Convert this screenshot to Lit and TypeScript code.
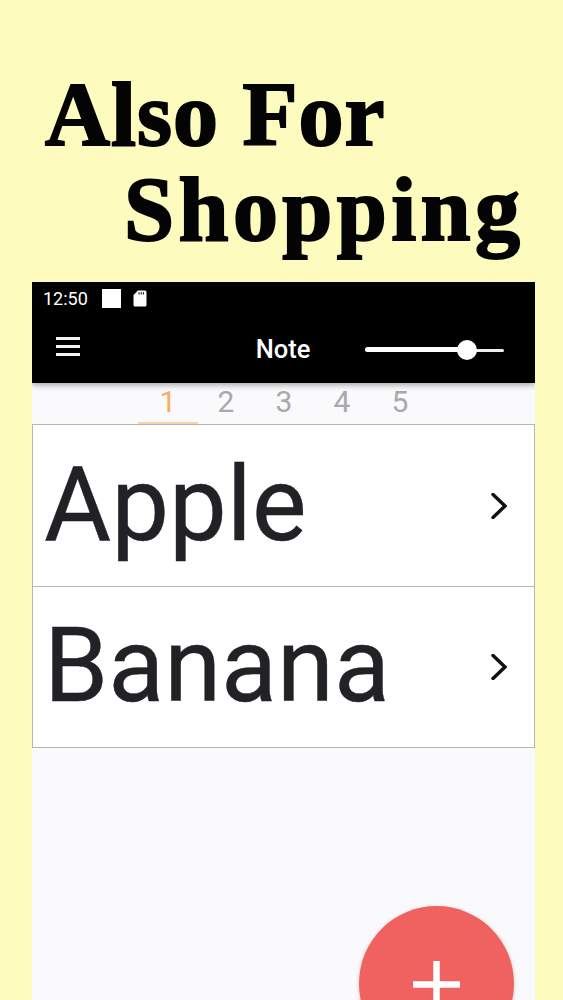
import { LitElement, html, css } from "lit";
import { customElement } from "lit/decorators.js";

@customElement("app-root")
export class AppRoot extends LitElement {
  static styles = css`
    :host { display: block; width: 563px; height: 1000px; overflow: hidden; background: #fdfcbe; font-family: Roboto, sans-serif; }
    .title { height: 282px; box-sizing: border-box; padding: 67px 0 0 45px; font-family: "Liberation Serif", serif; font-weight: 700; font-size: 90px; line-height: 95px; color: #050404; -webkit-text-stroke: 2px #050404; white-space: nowrap; }
    .title .one { letter-spacing: 1px; }
    .title .two { padding-left: 79px; letter-spacing: 4.4px; }
    .phone { position: relative; margin: 0 28px 0 32px; width: 503px; height: 718px; background: #faf9fc; overflow: hidden; }
    .bar { height: 101px; background: #000; color: #fff; box-shadow: 0 2px 6px rgba(0,0,0,.35); position: relative; z-index: 1; display: flex; flex-direction: column; }
    .status { height: 32px; display: flex; align-items: center; padding: 0 0 0 11px; font-size: 18px; }
    .status .time { width: 59px; }
    .square { width: 19px; height: 19px; background: #fff; margin-right: 12px; }
    .tool { flex: 1; display: grid; grid-template-columns: 1fr auto 1fr; align-items: center; padding: 0 31px 0 24px; }
    .menu { display: flex; flex-direction: column; gap: 5px; width: 24px; margin-top: -4px; }
    .menu i { display: block; height: 3px; background: #f4f4f4; }
    .name { font-size: 25.5px; font-weight: 500; margin-left: 6px; }
    .slider { justify-self: end; width: 139px; height: 22px; position: relative; margin-top: 2px; }
    .slider .on { position: absolute; left: 0; top: 8.5px; width: 100px; height: 5px; border-radius: 3px; background: #fff; }
    .slider .off { position: absolute; right: 0; top: 10px; width: 40px; height: 3px; border-radius: 2px; background: #eee; }
    .slider .thumb { position: absolute; left: 92px; top: 1px; width: 20px; height: 20px; border-radius: 50%; background: #fff; }
    .tabs { height: 42px; box-sizing: border-box; padding-left: 107px; display: flex; }
    .tab { width: 58px; box-sizing: border-box; text-align: center; font-size: 30px; line-height: 38px; color: #a9a9ab; }
    .tab.active { color: #f3b062; border-bottom: 2px solid #f6d3a8; width: 60px; margin-right: -1px; margin-left: -1px; height: 41px; }
    .list { display: flex; flex-direction: column; margin-top: -1px; }
    .row { height: 161px; box-sizing: border-box; background: #fff; border: 1px solid #b5b5b5; border-top: none; display: flex; align-items: center; justify-content: space-between; padding: 0 27px 0 11px; font-size: 103px; color: #222226; -webkit-text-stroke: 0.4px #222226; }
    .row:first-child { height: 163px; border-top: 1px solid #b5b5b5; }
    .row span { line-height: 1; margin-top: -3px; }
    .row svg { display: block; }
    .fab { position: absolute; left: 327px; top: 624px; width: 155px; height: 155px; border-radius: 50%; background: #f0625f; box-shadow: 0 1px 4px rgba(0,0,0,.2); }
    .fab svg { position: absolute; left: 54px; top: 55px; }
  `;

  render() {
    const chev = html`<svg width="16" height="26" viewBox="0 0 16 26"><path d="M2 1.5 L14 13 L2 24.5" fill="none" stroke="#111" stroke-width="3.4" stroke-linecap="round" stroke-linejoin="miter"/></svg>`;
    return html`
      <div class="title"><div class="one">Also For</div><div class="two">Shopping</div></div>
      <div class="phone">
        <div class="bar">
          <div class="status">
            <span class="time">12:50</span>
            <span class="square"></span>
            <svg width="14" height="17" viewBox="0 0 14 17"><path d="M5 0.5 H12 a1.5 1.5 0 0 1 1.5 1.5 V15 a1.5 1.5 0 0 1 -1.5 1.5 H2 a1.5 1.5 0 0 1 -1.5 -1.5 V5 Z" fill="#fff"/><path d="M6 2.2v2.3M8.2 2.2v2.3M10.4 2.2v2.3" stroke="#000" stroke-width="1"/></svg>
          </div>
          <div class="tool">
            <div class="menu"><i></i><i></i><i></i></div>
            <div class="name">Note</div>
            <div class="slider"><div class="off"></div><div class="on"></div><div class="thumb"></div></div>
          </div>
        </div>
        <div class="tabs">
          <div class="tab active">1</div><div class="tab">2</div><div class="tab">3</div><div class="tab">4</div><div class="tab">5</div>
        </div>
        <div class="list">
          <div class="row"><span>Apple</span>${chev}</div>
          <div class="row"><span>Banana</span>${chev}</div>
        </div>
        <div class="fab"><svg width="47" height="47" viewBox="0 0 47 47"><path d="M23.5 0V47M0 23.5H47" stroke="#fff" stroke-width="6.5"/></svg></div>
      </div>`;
  }
}
